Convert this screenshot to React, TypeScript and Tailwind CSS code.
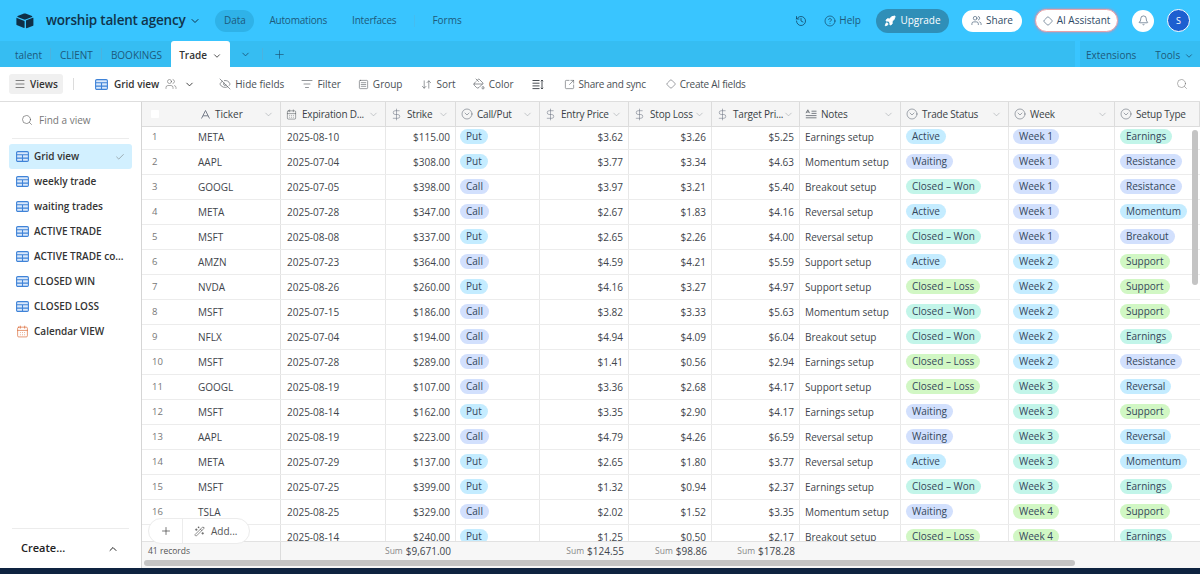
import {
  ArrowDownUp,
  Bell,
  CalendarDays,
  Check,
  ChevronDown,
  ChevronUp,
  CircleChevronDown,
  CircleHelp,
  DollarSign,
  Diamond,
  EyeOff,
  History,
  ListFilter,
  Menu,
  PaintBucket,
  Plus,
  Rocket,
  Search,
  SquareArrowOutUpRight,
  SquareMenu,
  Users,
  WandSparkles,
} from 'lucide-react'

const BLUE = 'bg-[#c4ecff]'
const PERI = 'bg-[#d2e0fd]'
const TEAL = 'bg-[#c2f5e9]'
const GREEN = 'bg-[#d1f7c4]'

const pillColors: Record<string, string> = {
  Put: BLUE,
  Call: PERI,
  Active: BLUE,
  Waiting: PERI,
  'Closed – Won': TEAL,
  'Closed – Loss': GREEN,
  'Week 1': PERI,
  'Week 2': BLUE,
  'Week 3': TEAL,
  'Week 4': GREEN,
  Earnings: TEAL,
  Resistance: PERI,
  Momentum: BLUE,
  Breakout: PERI,
  Support: GREEN,
  Reversal: BLUE,
}

const rows = [
  ['META', '2025-08-10', '$115.00', 'Put', '$3.62', '$3.26', '$5.25', 'Earnings setup', 'Active', 'Week 1', 'Earnings'],
  ['AAPL', '2025-07-04', '$308.00', 'Put', '$3.77', '$3.34', '$4.63', 'Momentum setup', 'Waiting', 'Week 1', 'Resistance'],
  ['GOOGL', '2025-07-05', '$398.00', 'Call', '$3.97', '$3.21', '$5.40', 'Breakout setup', 'Closed – Won', 'Week 1', 'Resistance'],
  ['META', '2025-07-28', '$347.00', 'Call', '$2.67', '$1.83', '$4.16', 'Reversal setup', 'Active', 'Week 1', 'Momentum'],
  ['MSFT', '2025-08-08', '$337.00', 'Put', '$2.65', '$2.26', '$4.00', 'Reversal setup', 'Closed – Won', 'Week 1', 'Breakout'],
  ['AMZN', '2025-07-23', '$364.00', 'Call', '$4.59', '$4.21', '$5.59', 'Support setup', 'Active', 'Week 2', 'Support'],
  ['NVDA', '2025-08-26', '$260.00', 'Put', '$4.16', '$3.27', '$4.97', 'Support setup', 'Closed – Loss', 'Week 2', 'Support'],
  ['MSFT', '2025-07-15', '$186.00', 'Call', '$3.82', '$3.33', '$5.63', 'Momentum setup', 'Closed – Won', 'Week 2', 'Support'],
  ['NFLX', '2025-07-04', '$194.00', 'Call', '$4.94', '$4.09', '$6.04', 'Breakout setup', 'Closed – Won', 'Week 2', 'Earnings'],
  ['MSFT', '2025-07-28', '$289.00', 'Call', '$1.41', '$0.56', '$2.94', 'Earnings setup', 'Closed – Loss', 'Week 2', 'Resistance'],
  ['GOOGL', '2025-08-19', '$107.00', 'Call', '$3.36', '$2.68', '$4.17', 'Support setup', 'Closed – Loss', 'Week 3', 'Reversal'],
  ['MSFT', '2025-08-14', '$162.00', 'Put', '$3.35', '$2.90', '$4.17', 'Earnings setup', 'Waiting', 'Week 3', 'Support'],
  ['AAPL', '2025-08-19', '$223.00', 'Call', '$4.79', '$4.26', '$6.59', 'Reversal setup', 'Waiting', 'Week 3', 'Reversal'],
  ['META', '2025-07-29', '$137.00', 'Put', '$2.65', '$1.80', '$3.77', 'Reversal setup', 'Active', 'Week 3', 'Momentum'],
  ['MSFT', '2025-07-25', '$399.00', 'Put', '$1.32', '$0.94', '$2.37', 'Earnings setup', 'Closed – Won', 'Week 3', 'Earnings'],
  ['TSLA', '2025-08-25', '$329.00', 'Call', '$2.02', '$1.52', '$3.35', 'Momentum setup', 'Waiting', 'Week 4', 'Support'],
  ['', '2025-08-14', '$240.00', 'Put', '$1.25', '$0.50', '$2.17', 'Breakout setup', 'Closed – Loss', 'Week 4', 'Earnings'],
]

const views = ['weekly trade', 'waiting trades', 'ACTIVE TRADE', 'ACTIVE TRADE co...', 'CLOSED WIN', 'CLOSED LOSS']

const columns = 'grid grid-cols-[139px_105px_70px_84px_89px_83px_88px_101px_108px_106px_85px]'

function Logo() {
  return (
    <svg width="18" height="16" viewBox="0 0 18 16" className="text-[#0f2f47]">
      <path d="M8 .6 1.600 3.100c-.4.2-.4.7 0 .9l6.500 2.500c.5.2 1 .2 1.400 0L16 4c.4-.2.4-.7 0-.9L9.500.6C9 .4 8.500.4 8 .6Z" fill="currentColor" />
      <path d="M10 7.700v7.100c0 .3.3.5.6.4l6.500-2.500c.2-.1.300-.3.300-.5V5.200c0-.3-.3-.5-.6-.4l-6.500 2.500c-.2.100-.3.200-.3.400Z" fill="currentColor" />
      <path d="M8.400 8 1 4.900c-.3-.1-.6.100-.6.400v6.200c0 .2.100.3.200.4l7.400 3.100c.3.100.6-.1.600-.4V8.400c0-.2-.1-.3-.2-.4Z" fill="currentColor" />
    </svg>
  )
}

function GridIcon() {
  return (
    <svg width="13" height="11" viewBox="0 0 13 11" fill="none" stroke="#3f83d8" strokeWidth="1.1" className="shrink-0">
      <rect x="0.6" y="0.6" width="11.800" height="9.800" rx="1.200" fill="#dbe9fb" />
      <path d="M0.600 3.800H12.400M0.600 7.100H12.400M6.500 3.800V10.400" />
    </svg>
  )
}

function TextIcon() {
  return (
    <svg width="11" height="11" viewBox="0 0 11 11" fill="none" stroke="#6b7280" strokeWidth="0.9" className="shrink-0">
      <path d="M1.500 9.500 5.500 1.500l4 8M3 6.800h5" />
    </svg>
  )
}

function NotesIcon() {
  return (
    <svg width="12" height="10" viewBox="0 0 12 10" fill="none" stroke="#5b6168" strokeWidth="0.8" className="shrink-0">
      <path d="M1 4.200 2.800.8l1.800 3.400M1.700 3h2.200M6.500 2.200h5M6.500 4.400h5M.8 6.600h10.700M.8 8.800h10.700" />
    </svg>
  )
}

function RowHeightIcon() {
  return (
    <svg width="12" height="11" viewBox="0 0 12 11" fill="none" stroke="#4a4f55" strokeWidth="1" className="shrink-0">
      <path d="M.5 1.500h7M.5 4.200h7M.5 6.900h7M.5 9.600h7M10 1v9M8.800 2.200 10 1l1.200 1.200M8.800 8.800 10 10l1.200-1.200" />
    </svg>
  )
}

function Pill({ label }: { label: string }) {
  return (
    <span className={`inline-flex h-[15px] items-center whitespace-nowrap rounded-full px-[6px] text-[#34465a] ${pillColors[label]}`}>
      {label}
    </span>
  )
}

function HeaderCell({ icon, label, last }: { icon: React.ReactNode; label: string; last?: boolean }) {
  return (
    <div className="flex min-w-0 items-center border-r border-[#dcdcdc] pl-[4px] pr-[6px] text-[#3a3f45]">
      <span className="mr-[4px] flex w-[13px] shrink-0 justify-center">{icon}</span>
      <span className="whitespace-nowrap tracking-[-0.2px]">{label}</span>
      {!last && <ChevronDown size={11} strokeWidth={1.2} className="ml-auto shrink-0 text-[#9aa0a6]" />}
    </div>
  )
}

function ToolButton({ icon, label, bold, tight }: { icon: React.ReactNode; label?: string; bold?: boolean; tight?: boolean }) {
  return (
    <div
      className={`flex items-center gap-[4px] whitespace-nowrap ${bold ? 'font-semibold text-[#333]' : 'text-[#4a4f55]'} ${tight ? 'tracking-[-0.25px]' : ''}`}
    >
      {icon}
      {label}
    </div>
  )
}

function SumCell({ value }: { value: string }) {
  return (
    <div className="flex items-center justify-end gap-[3px] whitespace-nowrap pr-[5px]">
      <span className="text-[8.5px] text-[#888]">Sum</span>
      <span>{value}</span>
    </div>
  )
}

export default function App() {
  const dollar = <DollarSign size={13} strokeWidth={1} className="text-[#6b7280]" />
  const select = <CircleChevronDown size={12} strokeWidth={1} className="text-[#4b5563]" />

  return (
    <div className="flex h-[574px] w-[1200px] flex-col overflow-hidden bg-white font-['Open_Sans',sans-serif] text-[10px] text-[#41454b]">
      {/* top bar */}
      <div className="flex h-[41px] shrink-0 items-center bg-[#39c5ff] pl-[16px] pr-[10px] text-[#1d5a7c]">
        <Logo />
        <span className="ml-[12px] whitespace-nowrap text-[13.5px] font-semibold tracking-[-0.2px] text-[#10344c]">worship talent agency</span>
        <ChevronDown size={12} className="ml-[4px] text-[#10344c]" />
        <span className="ml-[14px] flex h-[22px] w-[39px] items-center justify-center rounded-full bg-[#2fb2e8]">Data</span>
        <span className="ml-[15px] tracking-[-0.2px]">Automations</span>
        <span className="ml-[25px] tracking-[-0.2px]">Interfaces</span>
        <span className="ml-[18px] h-[12px] border-l border-[#45bdf0]" />
        <span className="ml-[17px]">Forms</span>

        <History size={12} strokeWidth={1.5} className="ml-auto text-[#10405f]" />
        <div className="ml-[17px] flex items-center gap-[3px]">
          <CircleHelp size={12} strokeWidth={1.3} className="text-[#10405f]" />
          <span>Help</span>
        </div>
        <div className="ml-[15px] flex h-[24px] w-[73px] items-center justify-center gap-[4px] rounded-full bg-[#2f8fb8] text-white">
          <Rocket size={12} fill="white" />
          <span>Upgrade</span>
        </div>
        <div className="ml-[13px] flex h-[22px] w-[60px] items-center justify-center gap-[4px] rounded-full bg-white text-[#2f4a66]">
          <Users size={11} strokeWidth={1.3} />
          <span>Share</span>
        </div>
        <div className="ml-[13px] flex h-[23px] w-[83px] items-center justify-center gap-[4px] rounded-full border border-[#e9a2a8] bg-white text-[#2f4a66] shadow-[0_0_3px_#d88aa8]">
          <Diamond size={10} strokeWidth={1.4} />
          <span>AI Assistant</span>
        </div>
        <div className="ml-[14px] flex h-[22px] w-[22px] items-center justify-center rounded-full bg-white">
          <Bell size={11} strokeWidth={1.3} className="text-[#2f4a66]" />
        </div>
        <div className="ml-[13px] flex h-[23px] w-[23px] items-center justify-center rounded-full border border-white bg-[#1d5fd0] text-[9px] text-white">S</div>
      </div>

      {/* table tabs */}
      <div className="flex h-[26px] shrink-0 items-center bg-[#36bdf2] text-[#1d5a7c]">
        <span className="ml-[15px] pt-[3px]">talent</span>
        <span className="ml-[8px] h-[12px] border-l border-[#4bb3df]" />
        <span className="ml-[9px] pt-[3px]">CLIENT</span>
        <span className="ml-[8px] h-[12px] border-l border-[#4bb3df]" />
        <span className="ml-[9px] pt-[3px]">BOOKINGS</span>
        <div className="ml-[9px] flex h-[26px] w-[59px] items-center justify-center gap-[5px] self-end rounded-t-[3px] bg-white pt-[3px] font-semibold text-[#333]">
          Trade
          <ChevronDown size={10} />
        </div>
        <ChevronDown size={11} className="ml-[10px]" />
        <span className="ml-[11px] h-[12px] border-l border-[#4bb3df]" />
        <Plus size={13} strokeWidth={1.3} className="ml-[10px]" />
        <div className="ml-auto flex h-full w-[125px] items-center gap-[19px] border-l-[5px] border-[#39c5ff] pl-[6px] pt-[3px]">
          <span>Extensions</span>
          <span className="flex items-center gap-[4px]">
            Tools
            <ChevronDown size={10} />
          </span>
        </div>
      </div>

      {/* view toolbar */}
      <div className="flex h-[35px] shrink-0 items-center border-b border-[#dedede] pl-[9px] pr-[12px]">
        <div className="flex h-[20px] w-[54px] items-center justify-center gap-[4px] rounded-[3px] bg-[#f0f0f0] font-semibold text-[#333]">
          <Menu size={12} strokeWidth={1.2} />
          Views
        </div>
        <span className="ml-[10px] h-[12px] border-l border-[#dcdcdc]" />
        <div className="ml-[21px] flex items-center gap-[6px] whitespace-nowrap font-semibold text-[#333]">
          <GridIcon />
          Grid view
        </div>
        <Users size={12} strokeWidth={1} className="ml-[6px] text-[#555]" />
        <ChevronDown size={11} className="ml-[7px] text-[#333]" />
        <div className="ml-[24px]">
          <ToolButton icon={<EyeOff size={12} strokeWidth={1.2} />} label="Hide fields" />
        </div>
        <div className="ml-[17px]">
          <ToolButton icon={<ListFilter size={12} strokeWidth={1.2} />} label="Filter" />
        </div>
        <div className="ml-[17px]">
          <ToolButton icon={<SquareMenu size={11} strokeWidth={1.2} />} label="Group" />
        </div>
        <div className="ml-[19px]">
          <ToolButton icon={<ArrowDownUp size={11} strokeWidth={1.2} />} label="Sort" />
        </div>
        <div className="ml-[17px]">
          <ToolButton icon={<PaintBucket size={12} strokeWidth={1.2} />} label="Color" />
        </div>
        <div className="ml-[18px]">
          <ToolButton icon={<RowHeightIcon />} />
        </div>
        <div className="ml-[20px]">
          <ToolButton icon={<SquareArrowOutUpRight size={11} strokeWidth={1.2} />} label="Share and sync" tight />
        </div>
        <div className="ml-[20px]">
          <ToolButton icon={<Diamond size={10} strokeWidth={1.3} />} label="Create AI fields" tight />
        </div>
        <Search size={12} strokeWidth={1} className="ml-auto text-[#666]" />
      </div>

      <div className="flex min-h-0 flex-1">
        {/* views sidebar */}
        <div className="flex w-[141px] shrink-0 flex-col px-[9px] text-[#333]">
          <div className="mx-[3px] flex h-[37px] shrink-0 items-center gap-[6px] border-b border-[#ececec] pl-[9px] text-[#777]">
            <Search size={12} strokeWidth={1.2} className="text-[#555]" />
            Find a view
          </div>
          <div className="mt-[5px] flex h-[25px] shrink-0 items-center gap-[5px] rounded-[3px] bg-[#d2f0ff] px-[7px] font-semibold">
            <GridIcon />
            <span className="flex-1">Grid view</span>
            <Check size={10} strokeWidth={1.2} className="text-[#666]" />
          </div>
          {views.map((v) => (
            <div key={v} className="flex h-[25px] shrink-0 items-center gap-[5px] whitespace-nowrap px-[7px] font-semibold">
              <GridIcon />
              {v}
            </div>
          ))}
          <div className="flex h-[25px] shrink-0 items-center gap-[5px] px-[7px] font-semibold">
            <CalendarDays size={13} strokeWidth={1.2} className="shrink-0 text-[#d9622b]" />
            Calendar VIEW
          </div>
          <div className="mx-[3px] mt-auto flex h-[40px] items-center justify-between border-t border-[#ececec] pl-[9px] pr-[10px] text-[#222]">
            <span className="text-[11px] font-semibold">Create...</span>
            <ChevronUp size={12} />
          </div>
        </div>

        {/* grid */}
        <div className="relative flex min-w-0 flex-1 flex-col border-l border-[#d5d5d5]">
          <div className={`${columns} relative z-10 h-[25px] shrink-0 border-b border-[#dcdcdc] bg-[#f5f5f5]`}>
            <div className="flex items-center border-r border-[#dcdcdc] pr-[6px] text-[#3a3f45]">
              <span className="ml-[9px] h-[8px] w-[8px] rounded-[1px] bg-white" />
              <span className="ml-[41px] flex items-center gap-[4px]">
                <TextIcon />
                Ticker
              </span>
              <ChevronDown size={11} strokeWidth={1.2} className="ml-auto text-[#9aa0a6]" />
            </div>
            <HeaderCell icon={<CalendarDays size={11} strokeWidth={1} />} label="Expiration D..." />
            <HeaderCell icon={dollar} label="Strike" />
            <HeaderCell icon={select} label="Call/Put" />
            <HeaderCell icon={dollar} label="Entry Price" />
            <HeaderCell icon={dollar} label="Stop Loss" />
            <HeaderCell icon={dollar} label="Target Pri..." />
            <HeaderCell icon={<NotesIcon />} label="Notes" />
            <HeaderCell icon={select} label="Trade Status" />
            <HeaderCell icon={select} label="Week" />
            <HeaderCell icon={select} label="Setup Type" last />
          </div>

          <div className="min-h-0 flex-1 overflow-hidden">
            <div className="-mt-[2px]">
              {rows.map((r, i) => (
                <div key={i} className={`${columns} h-[25px] border-b border-[#ececec]`}>
                  <div className="flex items-center border-r border-[#e2e2e2]">
                    <span className="ml-[10px] w-[46px] text-[9.5px] text-[#777]">{i + 1}</span>
                    <span>{r[0]}</span>
                  </div>
                  <div className="flex items-center border-r border-[#e8e8e8] pl-[6px]">{r[1]}</div>
                  <div className="flex items-center justify-end border-r border-[#e8e8e8] pr-[5px]">{r[2]}</div>
                  <div className="flex items-center border-r border-[#e8e8e8] pb-[1px] pl-[4px]">
                    <Pill label={r[3]} />
                  </div>
                  <div className="flex items-center justify-end border-r border-[#e8e8e8] pr-[5px]">{r[4]}</div>
                  <div className="flex items-center justify-end border-r border-[#e8e8e8] pr-[5px]">{r[5]}</div>
                  <div className="flex items-center justify-end border-r border-[#e8e8e8] pr-[5px]">{r[6]}</div>
                  <div className="flex items-center whitespace-nowrap border-r border-[#e8e8e8] pl-[5px]">{r[7]}</div>
                  <div className="flex items-center border-r border-[#e8e8e8] pb-[1px] pl-[5px]">
                    <Pill label={r[8]} />
                  </div>
                  <div className="flex items-center border-r border-[#e8e8e8] pb-[1px] pl-[4px]">
                    <Pill label={r[9]} />
                  </div>
                  <div className="flex items-center pb-[1px] pl-[5px]">
                    <Pill label={r[10]} />
                  </div>
                </div>
              ))}
            </div>
          </div>

          <div className={`${columns} relative z-10 h-[19px] shrink-0 border-t border-[#e2e2e2] bg-[#f7f7f7]`}>
            <div className="flex items-center border-r border-[#dcdcdc] pl-[6px] text-[8.5px] text-[#555]">41 records</div>
            <div />
            <SumCell value="$9,671.00" />
            <div />
            <SumCell value="$124.55" />
            <SumCell value="$98.86" />
            <SumCell value="$178.28" />
          </div>
          <div className="h-[8px] shrink-0 bg-[#f7f7f7] px-[2px] pb-[2px]">
            <div className="h-[6px] w-[931px] rounded-full bg-[#c4c4c4]" />
          </div>

          {/* floating add button */}
          <div className="absolute left-[6px] top-[416px] z-20 flex h-[26px] w-[102px] items-center rounded-full border border-[#ececec] bg-white text-[#555]">
            <span className="flex h-full w-[34px] items-center justify-center border-r border-[#ececec]">
              <Plus size={12} strokeWidth={1.3} className="text-[#333]" />
            </span>
            <span className="ml-[11px] flex items-center gap-[6px]">
              <WandSparkles size={11} strokeWidth={1.2} className="text-[#333]" />
              Add...
            </span>
          </div>

          {/* vertical scrollbar */}
          <div className="absolute left-[1050px] top-[28px] z-20 h-[155px] w-[6px] rounded-full bg-[#c4c4c4]" />
        </div>
      </div>

      {/* desktop strip below the window */}
      <div className="h-[6px] shrink-0 bg-[#0e2340]" />
    </div>
  )
}
